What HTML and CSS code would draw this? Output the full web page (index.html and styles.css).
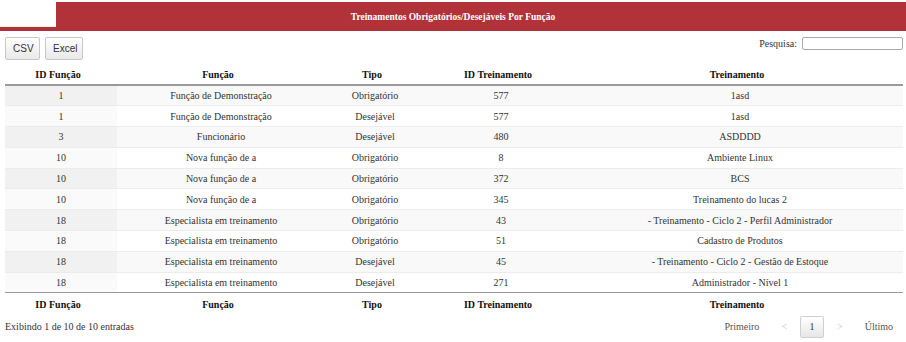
FILE: index.html
```html
<!DOCTYPE html>
<html lang="pt-BR">
<head>
<meta charset="utf-8">
<title>Treinamentos</title>
<link rel="stylesheet" href="styles.css">
</head>
<body>
<header class="topbar">
  <div class="logo"></div>
  <h1 class="title">Treinamentos Obrigatórios/Desejáveis Por Função</h1>
</header>
<main class="content">
  <div class="toolbar">
    <div class="buttons">
      <button class="btn">CSV</button>
      <button class="btn">Excel</button>
    </div>
    <label class="search">Pesquisa: <input type="text" class="search-input"></label>
  </div>
  <table class="grid">
    <colgroup>
      <col class="c1"><col class="c2"><col class="c3"><col class="c4"><col class="c5">
    </colgroup>
    <thead>
      <tr><th>ID Função</th><th>Função</th><th>Tipo</th><th>ID Treinamento</th><th>Treinamento</th></tr>
    </thead>
    <tbody>
      <tr class="odd"><td class="sorted">1</td><td>Função de Demonstração</td><td>Obrigatório</td><td>577</td><td>1asd</td></tr>
      <tr class="even"><td class="sorted">1</td><td>Função de Demonstração</td><td>Desejável</td><td>577</td><td>1asd</td></tr>
      <tr class="odd"><td class="sorted">3</td><td>Funcionário</td><td>Desejável</td><td>480</td><td>ASDDDD</td></tr>
      <tr class="even"><td class="sorted">10</td><td>Nova função de a</td><td>Obrigatório</td><td>8</td><td>Ambiente Linux</td></tr>
      <tr class="odd"><td class="sorted">10</td><td>Nova função de a</td><td>Obrigatório</td><td>372</td><td>BCS</td></tr>
      <tr class="even"><td class="sorted">10</td><td>Nova função de a</td><td>Obrigatório</td><td>345</td><td>Treinamento do lucas 2</td></tr>
      <tr class="odd"><td class="sorted">18</td><td>Especialista em treinamento</td><td>Obrigatório</td><td>43</td><td>- Treinamento - Ciclo 2 - Perfil Administrador</td></tr>
      <tr class="even"><td class="sorted">18</td><td>Especialista em treinamento</td><td>Obrigatório</td><td>51</td><td>Cadastro de Produtos</td></tr>
      <tr class="odd"><td class="sorted">18</td><td>Especialista em treinamento</td><td>Desejável</td><td>45</td><td>- Treinamento - Ciclo 2 - Gestão de Estoque</td></tr>
      <tr class="even"><td class="sorted">18</td><td>Especialista em treinamento</td><td>Desejável</td><td>271</td><td>Administrador - Nível 1</td></tr>
    </tbody>
    <tfoot>
      <tr><th>ID Função</th><th>Função</th><th>Tipo</th><th>ID Treinamento</th><th>Treinamento</th></tr>
    </tfoot>
  </table>
  <div class="footer">
    <div class="info">Exibindo 1 de 10 de 10 entradas</div>
    <nav class="pager">
      <span class="pg first">Primeiro</span>
      <span class="pg prev">&lt;</span>
      <span class="pg current">1</span>
      <span class="pg next">&gt;</span>
      <span class="pg last">Último</span>
    </nav>
  </div>
</main>
</body>
</html>
```

FILE: styles.css
```css
* { box-sizing: border-box; }
html, body { margin: 0; padding: 0; background: #fff; }
body {
  font-family: "Liberation Serif", "Times New Roman", serif;
  font-size: 10px;
  color: #333;
}
.topbar {
  position: relative;
  margin-top: 2px;
  height: 29px;
  background: #b13339;
  display: flex;
  align-items: center;
  justify-content: center;
}
.logo {
  position: absolute;
  left: 0;
  top: -2px;
  width: 56px;
  height: 27px;
  background: #fff;
  border-bottom: 1px solid #f0f0f0;
}
.title {
  margin: 0;
  font-size: 9.5px;
  font-weight: bold;
  color: #fff;
  padding-top: 1px;
}
.content { padding: 0 3px 0 5px; }
.toolbar {
  display: flex;
  justify-content: space-between;
  align-items: flex-start;
  margin-top: 6px;
  height: 27px;
}
.buttons { display: flex; gap: 5px; }
.btn {
  font-family: "Liberation Sans", Arial, sans-serif;
  font-size: 10px;
  color: #333;
  height: 23px;
  padding: 0 7px;
  border: 1px solid #c8c8c8;
  border-radius: 2px;
  background: linear-gradient(#ffffff, #e9e9e9);
}
.btn:first-child { width: 35px; }
.btn:last-child { width: 38px; }
.search {
  display: flex;
  align-items: center;
  gap: 5px;
  color: #333;
  font-size: 10px;
}
.search-input {
  width: 101px;
  height: 13px;
  border: 1px solid #aaa;
  border-radius: 2px;
  padding: 0;
  margin: 0;
}
.grid {
  width: 898px;
  table-layout: fixed;
  border-collapse: collapse;
}
.c1 { width: 112px; }
.c2 { width: 208px; }
.c3 { width: 100px; }
.c4 { width: 152px; }
.c5 { width: 326px; }
.grid th {
  font-weight: bold;
  color: #111;
  text-align: center;
  padding: 0 6px 0 0;
}
.grid thead th {
  height: 21px;
  border-bottom: 2px solid #9a9a9a;
}
.grid tfoot th {
  height: 23px;
  border-top: 1.5px solid #9a9a9a;
}
.grid td {
  text-align: center;
  padding: 0;
  height: 20.8px;
  color: #333;
}
.grid tbody tr + tr td { border-top: 1px solid #ececec; }
.grid tr.odd td { background: #f9f9f9; }
.grid tr.odd td.sorted { background: #f1f1f1; }
.grid tr.even td.sorted { background: #fafafa; }
.footer {
  display: flex;
  justify-content: space-between;
  align-items: center;
  margin-top: 0;
}
.info { color: #333; }
.pager {
  display: flex;
  align-items: center;
  margin-right: 10px;
}
.pg { color: #555; }
.first { margin-right: 22px; }
.prev, .next { color: #bbb; }
.prev { margin-right: 13px; }
.next { margin-left: 13px; margin-right: 22px; }
.pg.current {
  display: flex;
  align-items: center;
  justify-content: center;
  width: 24px;
  height: 22px;
  border: 1px solid #cfcfcf;
  border-radius: 2px;
  background: linear-gradient(#ffffff, #e6e6e6);
  color: #333;
}
```
